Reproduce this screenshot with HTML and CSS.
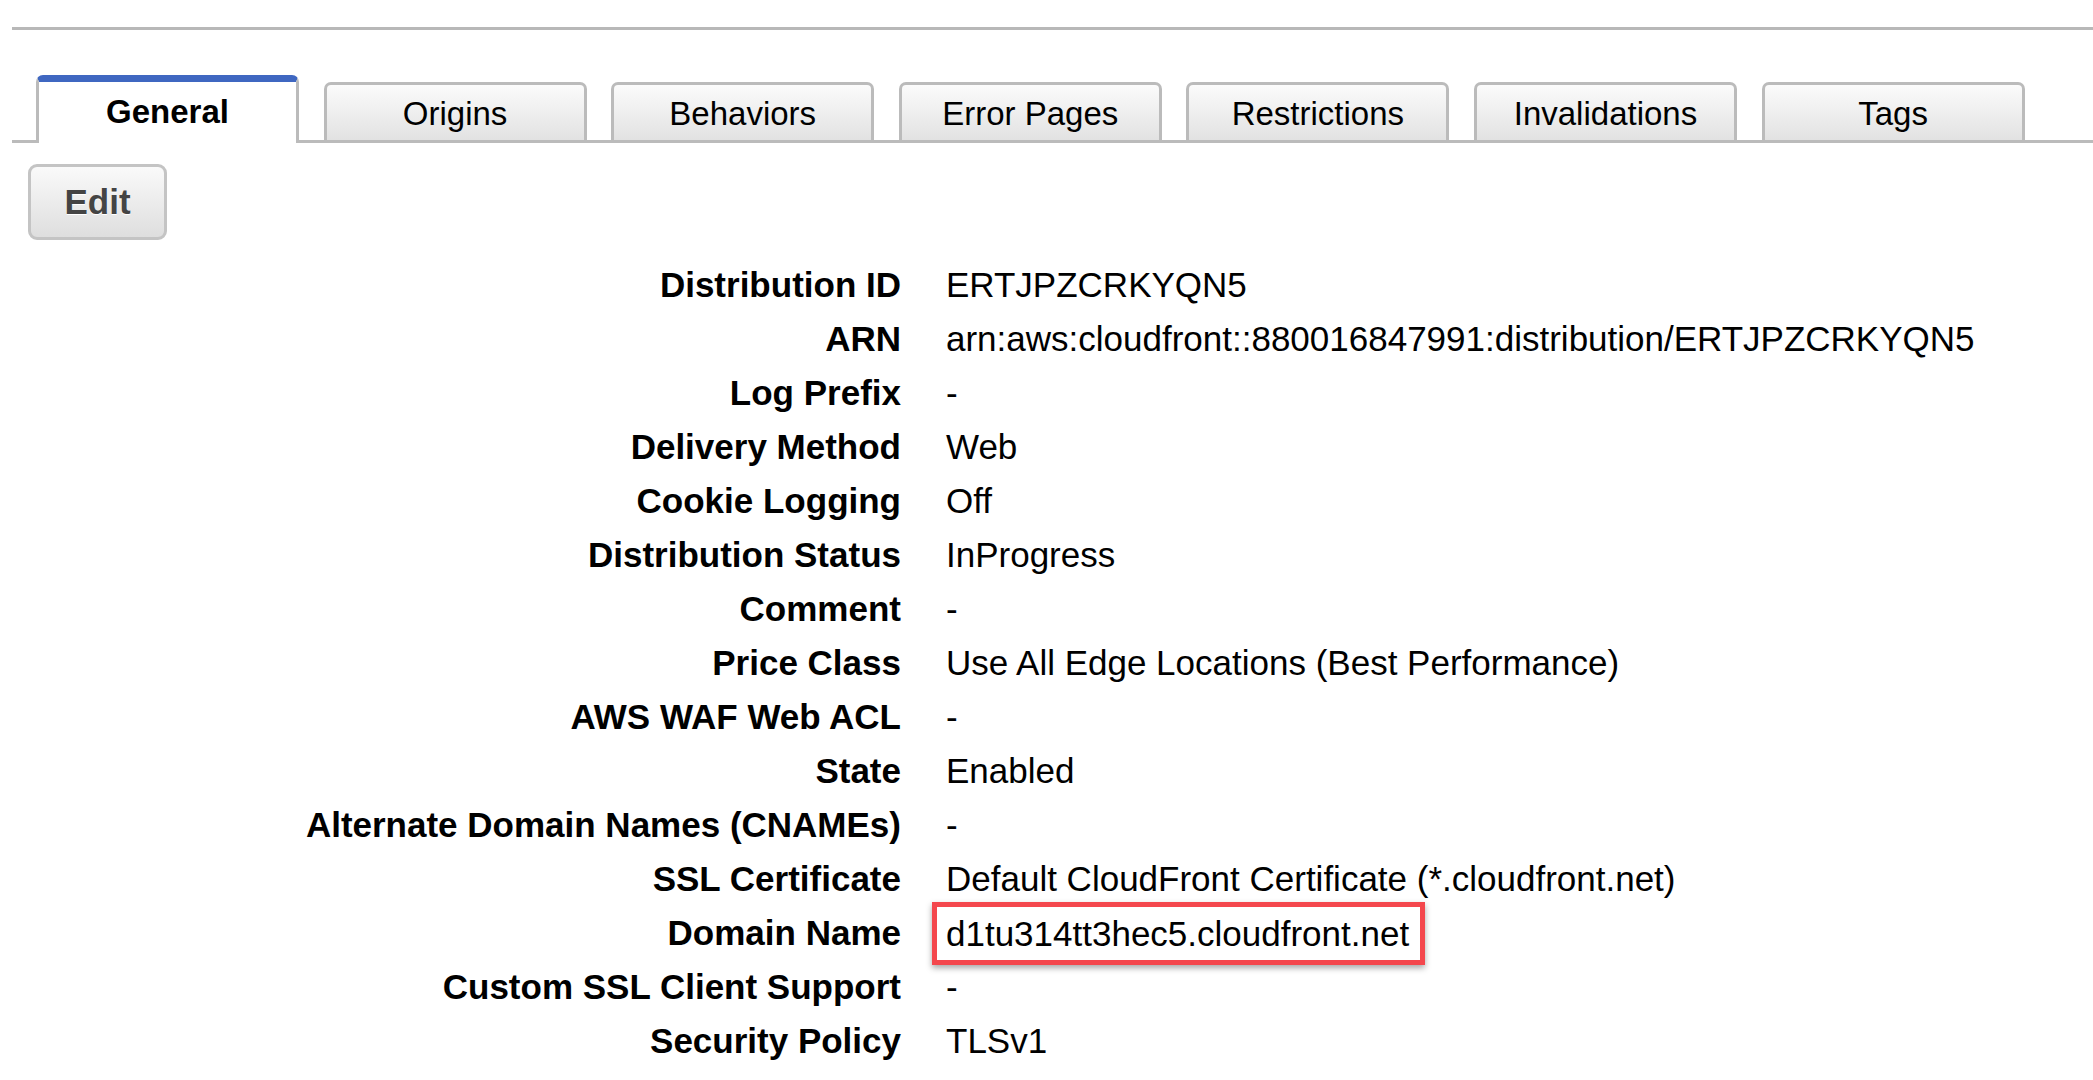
FILE: index.html
```html
<!DOCTYPE html>
<html>
<head>
<meta charset="utf-8">
<link rel="stylesheet" href="styles.css">
</head>
<body>
<div class="topline"></div>
<div class="tabs">
  <div class="tab active">General</div>
  <div class="tab">Origins</div>
  <div class="tab">Behaviors</div>
  <div class="tab">Error Pages</div>
  <div class="tab">Restrictions</div>
  <div class="tab">Invalidations</div>
  <div class="tab">Tags</div>
</div>
<div class="toolbar">
  <button class="btn">Edit</button>
</div>
<div class="details">
  <div class="label">Distribution ID</div><div class="value">ERTJPZCRKYQN5</div>
  <div class="label">ARN</div><div class="value">arn:aws:cloudfront::880016847991:distribution/ERTJPZCRKYQN5</div>
  <div class="label">Log Prefix</div><div class="value">-</div>
  <div class="label">Delivery Method</div><div class="value">Web</div>
  <div class="label">Cookie Logging</div><div class="value">Off</div>
  <div class="label">Distribution Status</div><div class="value">InProgress</div>
  <div class="label">Comment</div><div class="value">-</div>
  <div class="label">Price Class</div><div class="value">Use All Edge Locations (Best Performance)</div>
  <div class="label">AWS WAF Web ACL</div><div class="value">-</div>
  <div class="label">State</div><div class="value">Enabled</div>
  <div class="label">Alternate Domain Names (CNAMEs)</div><div class="value">-</div>
  <div class="label">SSL Certificate</div><div class="value">Default CloudFront Certificate (*.cloudfront.net)</div>
  <div class="label">Domain Name</div><div class="value"><span class="hl">d1tu314tt3hec5.cloudfront.net</span></div>
  <div class="label">Custom SSL Client Support</div><div class="value">-</div>
  <div class="label">Security Policy</div><div class="value">TLSv1</div>
</div>
</body>
</html>
```

FILE: styles.css
```css
html, body {
  margin: 0;
  padding: 0;
  background: #fff;
}
body {
  font-family: "Liberation Sans", Arial, sans-serif;
  color: #000;
  overflow: hidden;
}
.topline {
  margin: 27px 0 0 12px;
  height: 3px;
  background: #b8b8b8;
}
.tabs {
  margin: 45px 0 0 12px;
  padding-left: 24px;
  display: flex;
  align-items: flex-end;
  gap: 24.6px;
  border-bottom: 3px solid #bbb;
  box-sizing: border-box;
  height: 68px;
}
.tab {
  width: 263px;
  height: 58px;
  box-sizing: border-box;
  border: 3px solid #bbb;
  border-bottom: none;
  border-radius: 7px 7px 0 0;
  background: linear-gradient(#fbfbfb, #e2e2e2);
  font-size: 33px;
  display: flex;
  align-items: center;
  justify-content: center;
  padding-top: 3px;
}
.tab.active {
  height: 68px;
  margin-bottom: -3px;
  background: #fff;
  border-top: 7px solid #3f67c1;
  font-weight: bold;
  padding-top: 1px;
  padding-bottom: 2px;
}
.toolbar {
  padding: 21px 0 0 28px;
}
.btn {
  width: 139px;
  height: 76px;
  box-sizing: border-box;
  border: 3px solid #c4c4c4;
  border-radius: 9px;
  background: linear-gradient(#fafafa, #dedede);
  font-family: "Liberation Sans", Arial, sans-serif;
  font-weight: bold;
  font-size: 35px;
  color: #444;
  text-shadow: 0 1px 0 #fff;
  padding: 0;
  margin: 0;
  display: block;
}
.details {
  margin-top: 18px;
  display: grid;
  grid-template-columns: 901px auto;
  column-gap: 45px;
  grid-auto-rows: 54px;
  font-size: 35px;
}
.label {
  font-weight: bold;
  text-align: right;
  display: flex;
  align-items: center;
  justify-content: flex-end;
  white-space: nowrap;
}
.value {
  display: flex;
  align-items: center;
  white-space: nowrap;
}
.hl {
  display: inline-block;
  line-height: 53px;
  padding: 0 11px 0 9px;
  margin-left: -14px;
  border: 5px solid #f4474d;
  box-shadow: 0 3px 6px rgba(0, 0, 0, 0.35);
  flex-shrink: 0;
}
```
